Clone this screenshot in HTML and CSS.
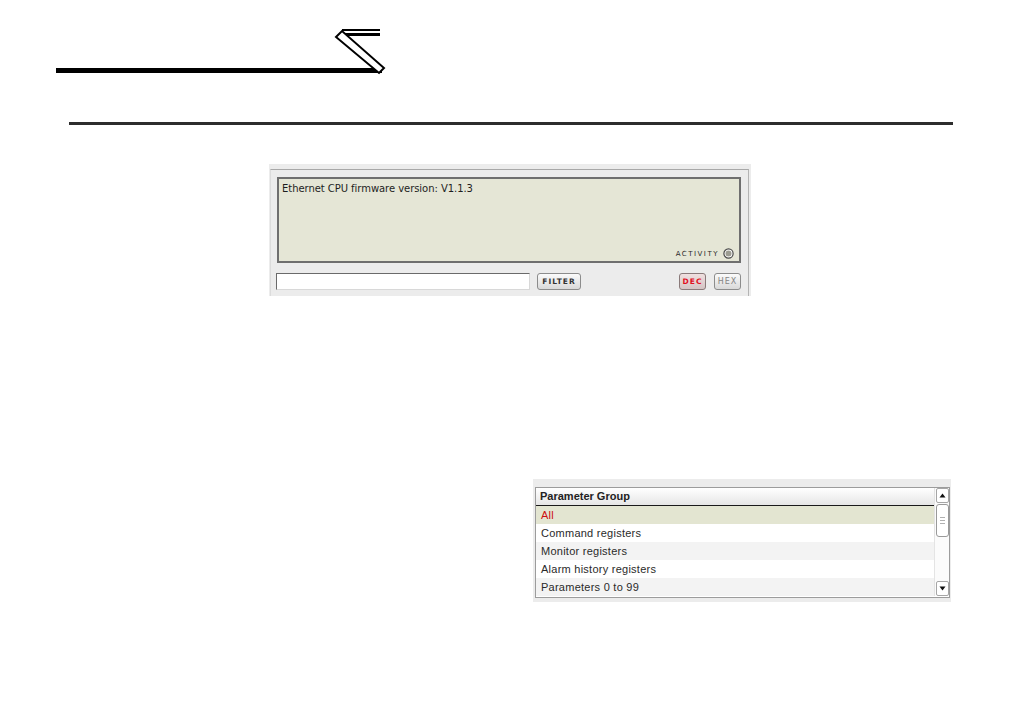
FILE: index.html
```html
<!doctype html>
<html>
<head>
<meta charset="utf-8">
<title>Ethernet CPU - Monitor</title>
<link rel="stylesheet" href="styles.css">
</head>
<body>

<header class="pagehead">
    <svg class="logo" width="400" height="80" viewBox="0 0 400 80">
        <rect x="56" y="68" width="326" height="5" fill="#000"/>
        <rect x="342" y="29" width="38" height="2" fill="#000"/>
        <rect x="343" y="33" width="37" height="3" fill="#000"/>
        <polygon points="336,37 342,31 384,68 379,73" fill="#fff" stroke="#000" stroke-width="2" stroke-linejoin="miter"/>
    </svg>
</header>

<hr class="rule">

<section class="console">
    <div class="console-frame">
        <div class="display">
            <div class="display-text">Ethernet CPU firmware version: V1.1.3</div>
            <div class="activity">
                <span>ACTIVITY</span>
                <svg width="11" height="11" viewBox="0 0 11 11">
                    <circle cx="5.5" cy="5.5" r="4.6" fill="#fff" stroke="#4a4a4a" stroke-width="1.2"/>
                    <circle cx="5.5" cy="5.5" r="3" fill="#9c9c92"/>
                </svg>
            </div>
        </div>
        <div class="controls">
            <input class="filter-input" type="text">
            <button class="btn">FILTER</button>
            <button class="btn btn-dec">DEC</button>
            <button class="btn btn-hex">HEX</button>
        </div>
    </div>
</section>

<section class="groups">
    <div class="list">
        <div class="list-body">
            <div class="list-head">Parameter Group</div>
            <div class="row row-sel">All</div>
            <div class="row">Command registers</div>
            <div class="row row-alt">Monitor registers</div>
            <div class="row">Alarm history registers</div>
            <div class="row row-alt">Parameters 0 to 99</div>
        </div>
        <div class="scrollbar">
            <div class="sb-btn"><svg width="7" height="5" viewBox="0 0 7 5"><polygon points="3.5,0.5 6.5,4.5 0.5,4.5" fill="#111"/></svg></div>
            <div class="sb-thumb"><span></span><span></span><span></span></div>
            <div class="sb-space"></div>
            <div class="sb-btn"><svg width="7" height="5" viewBox="0 0 7 5"><polygon points="0.5,0.5 6.5,0.5 3.5,4.5" fill="#111"/></svg></div>
        </div>
    </div>
</section>

</body>
</html>
```

FILE: styles.css
```css
html, body { margin: 0; padding: 0; background: #fff; }
body { font-family: "Liberation Sans", Arial, sans-serif; color: #222; }

.pagehead { height: 80px; }
.logo { display: block; }

.rule { margin: 42px 0 0 69px; width: 884px; height: 3px; border: 0; background: #2d2d2d; }

/* console panel */
.console { margin: 39px 0 0 269px; width: 482px; padding: 5px 0 0 0; background: #ececec; box-sizing: border-box; }
.console-frame { margin: 0 2px 0 1px; padding: 7px 8px 6px 6px; border-top: 1px solid #a8a8a8; border-right: 1px solid #b4b4b4; border-left: 1px solid #dcdcdc; }

.display { display: flex; flex-direction: column; justify-content: space-between; width: 464px; height: 86px; box-sizing: border-box; padding: 3px 5px 2px 3px; border: 2px solid #6f6f6f; background: #e5e6d6; }
.display-text { font-family: "DejaVu Sans", Verdana, sans-serif; font-size: 10px; letter-spacing: -0.05px; color: #1e1e1e; line-height: 13px; }
.activity { display: flex; justify-content: flex-end; align-items: center; gap: 4px; }
.activity span { font-family: "DejaVu Sans", Verdana, sans-serif; font-size: 7px; letter-spacing: 1.5px; color: #2a2a2a; }
.activity svg { display: block; }

.controls { display: flex; align-items: center; width: 464px; height: 17px; margin-top: 10px; }
.filter-input { width: 254px; height: 17px; box-sizing: border-box; margin: 0 0 0 -1px; padding: 0; border: 1px solid #d8d8d8; border-top-color: #6a6a6a; border-left-color: #6a6a6a; background: #fff; }
.btn { height: 17px; box-sizing: border-box; margin: 0 0 0 7px; padding: 0; border: 1px solid #8c8c8c; border-radius: 3px; background: linear-gradient(#fbfbfb, #d9d9d9); font-family: "DejaVu Sans", Verdana, sans-serif; font-size: 7.5px; font-weight: bold; letter-spacing: 1px; color: #333; width: 44px; }
.btn-dec { margin-left: auto; width: 27px; color: #e0101e; background: linear-gradient(#f0e0e0, #d4c4c4); border-color: #8a7a7a; }
.btn-hex { margin-left: 8px; width: 27px; color: #858585; font-weight: normal; font-size: 8px; }

/* parameter group list */
.groups { margin: 183px 0 0 533px; width: 418px; padding: 8px 1px 4px 2px; background: #ececec; box-sizing: border-box; }
.list { display: flex; border: 1px solid #9c9c9c; background: #fff; padding-bottom: 1px; }
.list-body { flex: 1; }
.list-head { height: 17px; line-height: 17px; padding-left: 4px; border-bottom: 1px solid #1a1a1a; background: linear-gradient(#ffffff, #e6e6e6); font-size: 11px; font-weight: bold; color: #222; }
.row { height: 18px; line-height: 18px; padding-left: 5px; font-size: 11px; letter-spacing: 0.25px; color: #2a2a2a; background: #fff; }
.row-alt { background: #f3f3f3; }
.row-sel { background: #e3e5d1; color: #cc1010; }

.scrollbar { display: flex; flex-direction: column; width: 13px; padding: 0 0 0 1px; background: #fbfbfb; border-left: 1px solid #e4e4e4; }
.sb-btn { display: flex; align-items: center; justify-content: center; height: 13px; border: 1px solid #a6a6a6; border-radius: 2px; background: #fff; }
.sb-btn svg { display: block; }
.sb-thumb { display: flex; flex-direction: column; align-items: center; justify-content: center; gap: 2px; height: 31px; margin-top: 1px; border: 1px solid #9a9a9a; border-radius: 3px; background: #fff; }
.sb-thumb span { display: block; width: 5px; height: 1px; background: #b0b0b0; }
.sb-space { flex: 1; }
```
